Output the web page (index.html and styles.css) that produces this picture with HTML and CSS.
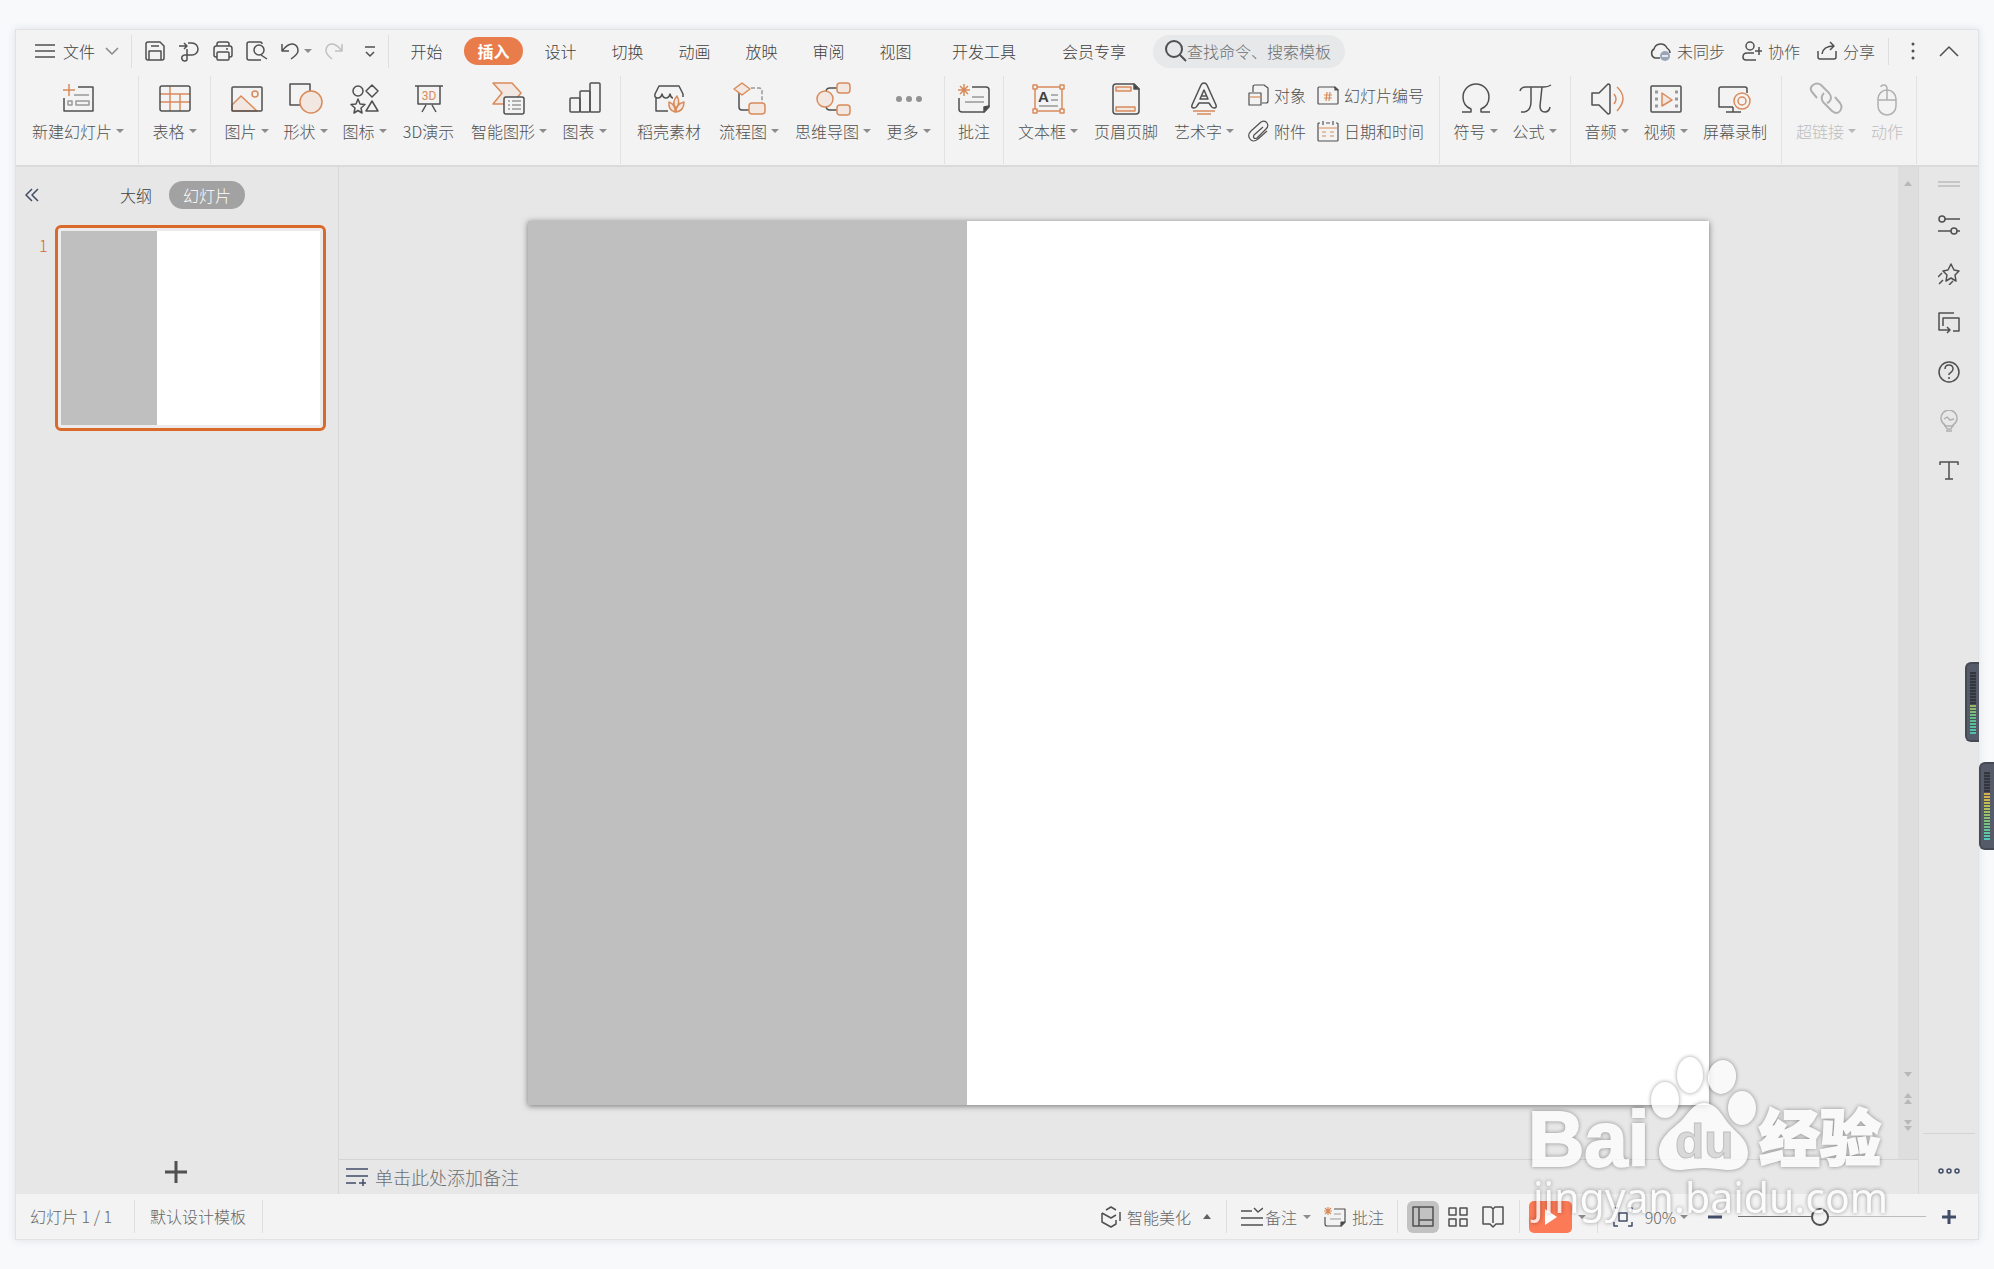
FILE: index.html
```html
<!DOCTYPE html>
<html lang="zh-CN">
<head>
<meta charset="utf-8">
<meta name="viewport" content="width=device-width, initial-scale=1">
<title>演示文稿</title>
<link rel="stylesheet" href="styles.css">
</head>
<body>
<div class="window">
  <header class="header">
    <nav class="menubar">
      <button class="file-menu">
        <svg class="ico" width="20" height="20" viewBox="0 0 20 20"><path d="M0 4h20M0 10h20M0 16h20"/></svg>
        <span>文件</span>
        <svg class="ico muted" width="14" height="10" viewBox="0 0 14 10"><path d="M1 2l6 6 6-6"/></svg>
      </button>
      <span class="rule"></span>
      <div class="quick">
        <button aria-label="保存"><svg class="ico" width="22" height="22" viewBox="0 0 22 22"><path d="M4 2h12l4 4v12q0 2-2 2H4q-2 0-2-2V4q0-2 2-2zM5 20v-9h12v9M7 6h8"/></svg></button>
        <button aria-label="输出"><svg class="ico" width="22" height="22" viewBox="0 0 22 22"><path d="M1 6h8M6 3l3 3-3 3M10 3h4a6 6 0 0 1 0 12H7a3 3 0 1 0 2 5V9"/></svg></button>
        <button aria-label="打印"><svg class="ico" width="22" height="22" viewBox="0 0 22 22"><path d="M5 6V4q0-2 2-2h8q2 0 2 2v2M5 17H4q-2 0-2-2V9q0-3 2-3h14q2 0 2 3v6q0 2-2 2h-1M6 12h10q1 0 1 1v6q0 1-1 1H6q-1 0-1-1v-6q0-1 1-1zM14 9h2"/></svg></button>
        <button aria-label="打印预览"><svg class="ico" width="22" height="22" viewBox="0 0 22 22"><path d="M8 20H3q-2 0-2-2V4q0-2 2-2h11q2 0 2 2"/><circle cx="13" cy="10" r="5"/><path d="M15 15l6 4M8 20h7"/></svg></button>
        <button class="undo" aria-label="撤销"><svg class="ico" width="20" height="22" viewBox="0 0 20 22"><path d="M2 4v7h7M2 11Q8 3 13 4q5 1 5 7 0 3-7 8"/></svg><i class="caret"></i></button>
        <button aria-label="恢复" disabled><svg class="ico pale" width="20" height="22" viewBox="0 0 20 22"><path d="M18 4v7h-7M18 11Q12 3 7 4q-5 1-5 7 0 3 6 8"/></svg></button>
        <button class="more-quick" aria-label="自定义"><svg class="ico" width="12" height="22" viewBox="0 0 12 22"><path d="M1 7h10M2 12l4 4 4-4"/></svg></button>
      </div>
      <span class="rule"></span>
      <div class="tabs">
        <button>开始</button><button class="active">插入</button><button>设计</button><button>切换</button><button>动画</button><button>放映</button><button>审阅</button><button>视图</button><button class="wide">开发工具</button><button class="wide">会员专享</button>
      </div>
      <label class="search">
        <svg class="ico bold" width="22" height="22" viewBox="0 0 22 22"><circle cx="9" cy="9" r="8"/><path d="M15 15l6 6"/></svg>
        <input type="text" placeholder="查找命令、搜索模板" aria-label="查找命令、搜索模板">
      </label>
      <div class="account">
        <button><svg class="ico" width="22" height="22" viewBox="0 0 22 22"><path d="M11 18H6a5 5 0 0 1-1-9 7 7 0 0 1 13-1q3 2 3 5"/><circle class="badge" cx="16" cy="16" r="5"/><path class="light" d="M13 16h6"/></svg>未同步</button>
        <button><svg class="ico" width="20" height="22" viewBox="0 0 20 22"><circle cx="8" cy="6" r="4"/><path d="M14 20H4q-3 0-3-3 0-4 4-4h7M17 7v8M13 11h7"/></svg>协作</button>
        <button><svg class="ico" width="20" height="22" viewBox="0 0 20 22"><path d="M1 11v6q0 2 2 2h14q2 0 2-2v-6M5 14q1-8 12-8M13 2l4 4-4 4"/></svg>分享</button>
        <span class="rule"></span>
        <button aria-label="更多选项"><svg class="dots" width="6" height="20" viewBox="0 0 6 20"><circle cx="3" cy="3" r="1.500"/><circle cx="3" cy="10" r="1.500"/><circle cx="3" cy="17" r="1.500"/></svg></button>
        <button aria-label="收起功能区"><svg class="ico" width="20" height="12" viewBox="0 0 20 12"><path d="M1 11l9-9 9 9"/></svg></button>
      </div>
    </nav>

    <div class="ribbon">
      <div class="group">
        <button class="tool w5"><svg class="ico" width="36" height="36" viewBox="0 0 36 36"><path d="M18 7h15v24H4V18"/><path class="o" d="M3 10h12M9 4v12"/><path class="g" d="M14 15h15M8 21h4v4H8zM16 21h13v4H16z"/></svg><span>新建幻灯片<i class="caret"></i></span></button>
      </div>
      <div class="group">
        <button class="tool w2"><svg class="ico" width="36" height="36" viewBox="0 0 36 36"><path class="o" d="M13 6v25M3 14h30M3 22h30M23 14v17"/><rect x="3" y="6" width="30" height="25" rx="2"/></svg><span>表格<i class="caret"></i></span></button>
      </div>
      <div class="group">
        <button class="tool w2"><svg class="ico" width="36" height="36" viewBox="0 0 36 36"><path class="of" d="M3 25l9-9 16 15H3z"/><circle class="o" cx="26" cy="14" r="3"/><rect x="3" y="7" width="30" height="24" rx="1"/></svg><span>图片<i class="caret"></i></span></button>
        <button class="tool w2"><svg class="ico" width="36" height="36" viewBox="0 0 36 36"><path d="M2 4h20v21H2z"/><circle class="of" cx="23" cy="22" r="11"/></svg><span>形状<i class="caret"></i></span></button>
        <button class="tool w2"><svg class="ico" width="36" height="36" viewBox="0 0 36 36"><circle cx="11" cy="11" r="5"/><path d="M25 5l6 6-6 6-6-6zM25 21l6 10H19zM11 19l2 5 5 .5-4 3.500 1 5-4-2.500-4 2.500 1-5-4-3.500 5-.5z"/></svg><span>图标<i class="caret"></i></span></button>
        <button class="tool w3d"><svg class="ico" width="36" height="36" viewBox="0 0 36 36"><path d="M4 6h28M7 6v18h22V6M15 25l-4 7M21 25l4 7"/><text class="three-d" x="18" y="20">3D</text></svg><span>3D演示</span></button>
        <button class="tool w4"><svg class="ico" width="36" height="36" viewBox="0 0 36 36"><path class="of" d="M2 3h19l9 10-9 11H2l9-11z"/><rect class="paper" x="13" y="17" width="20" height="17" rx="2"/><path class="g" d="M17 21h2M21 21h9M17 25h2M21 25h9M17 29h2M21 29h9"/></svg><span>智能图形<i class="caret"></i></span></button>
        <button class="tool w2"><svg class="ico" width="36" height="36" viewBox="0 0 36 36"><rect x="3" y="18" width="10" height="14" rx="1"/><rect x="13" y="11" width="10" height="21" rx="1"/><rect x="23" y="3" width="10" height="29" rx="1"/></svg><span>图表<i class="caret"></i></span></button>
      </div>
      <div class="group">
        <button class="tool w4m"><svg class="ico" width="36" height="36" viewBox="0 0 36 36"><path d="M32 17v-3l-4-8H8l-4 8q-1 4 3 4 3 0 4-4 1 4 4 4t4-4q1 4 3 4M5 18v13h12"/><path class="of" d="M26 16q-6 7-1 12 5-5 1-12zM18 22q-1 8 6 10 1-7-6-10zM33 22q-8 2-8 10 8-1 8-10z"/></svg><span>稻壳素材</span></button>
        <button class="tool w3"><svg class="ico" width="36" height="36" viewBox="0 0 36 36"><path d="M8 13v14q0 3 3 3h7"/><path class="g" stroke-dasharray="4 2" d="M20 8h8q3 0 3 3v12"/><path class="of" d="M11 3l8 6-8 6-8-6z"/><rect class="of" x="18" y="23" width="16" height="11" rx="3"/></svg><span>流程图<i class="caret"></i></span></button>
        <button class="tool w4"><svg class="ico" width="36" height="36" viewBox="0 0 36 36"><path d="M11 12q0-4 4-4h7M11 26q0 4 4 4h7"/><circle class="of" cx="10" cy="19" r="8"/><rect class="of" x="22" y="3" width="13" height="10" rx="3"/><rect class="of" x="22" y="25" width="13" height="10" rx="3"/></svg><span>思维导图<i class="caret"></i></span></button>
        <button class="tool w2"><svg class="dots soft" width="36" height="36" viewBox="0 0 36 36"><circle cx="8" cy="19" r="3"/><circle cx="18" cy="19" r="3"/><circle cx="28" cy="19" r="3"/></svg><span>更多<i class="caret"></i></span></button>
      </div>
      <div class="group">
        <button class="tool w2n"><svg class="ico" width="36" height="36" viewBox="0 0 36 36"><path d="M16 7h14q3 0 3 3v17l-5 5H6q-3 0-3-3V18"/><path class="ink" d="M33 26l-5 6v-5z"/><path class="o" d="M2 10h12M8 4v12M4 6l8 8M12 6l-8 8"/><path class="g" d="M16 17h12M9 22h19"/></svg><span>批注</span></button>
      </div>
      <div class="group">
        <button class="tool w3"><svg class="ico" width="36" height="36" viewBox="0 0 36 36"><path class="o" d="M5 7h27v24H5z"/><path class="o paper" d="M3 5h4v4H3zM30 5h4v4h-4zM3 29h4v4H3zM30 29h4v4h-4z"/><text class="letter" x="8" y="22">A</text><path class="g" d="M21 15h7M21 20h7M9 26h19"/></svg><span>文本框<i class="caret"></i></span></button>
        <button class="tool w4n"><svg class="ico" width="36" height="36" viewBox="0 0 36 36"><path d="M8 4h18l5 5v22q0 3-3 3H8q-3 0-3-3V7q0-3 3-3z"/><path class="ink" d="M26 4v5h5z"/><path class="of" d="M8 7h15v4H8zM8 27h19v4H8z"/></svg><span>页眉页脚</span></button>
        <button class="tool w3"><svg class="ico" width="36" height="36" viewBox="0 0 36 36"><path d="M18 3q2 0 3 2l9 20q1 3-2 3-2 0-3-2l-2-3H13l-2 3q-1 2-3 2-3 0-2-3L15 5q1-2 3-2zM18 10l-4 9h8z"/><path d="M16 16h4"/><path class="o" d="M7 31h22M11 34h14"/></svg><span>艺术字<i class="caret"></i></span></button>
        <div class="pairs">
          <button><svg class="ico thin" width="22" height="22" viewBox="0 0 22 22"><path d="M6 8V3q0-2 2-2h9l4 3v13q0 2-2 2h-4"/><path d="M2 9h12v12H2z"/><path class="o" d="M2 13h12"/></svg>对象</button>
          <button><svg class="ico thin" width="22" height="22" viewBox="0 0 22 22"><path d="M2 3h15l4 3v13q0 1-1 1H2q-1 0-1-1V4q0-1 1-1z"/><path class="ink" d="M18 3v3h3z"/><path class="o" d="M7 11h8M7 14h8M10 8l-1 9M13 8l-1 9"/></svg>幻灯片编号</button>
          <button><svg class="ico thin" width="22" height="22" viewBox="0 0 22 22"><path d="M16 7l-9 8q-1 2 0 3t3 0l9-9q3-3 1-6t-6-1L4 11q-4 4-1 8t8 0l9-8"/></svg>附件</button>
          <button><svg class="ico thin" width="22" height="22" viewBox="0 0 22 22"><path d="M3 3H2q-1 0-1 1v16q0 1 1 1h18q1 0 1-1V4q0-1-1-1h-1M6 1v4M16 1v4M9 3h4"/><path class="o" d="M1 8h20M5 12h4M13 12h4M5 16h4M13 16h4"/></svg>日期和时间</button>
        </div>
      </div>
      <div class="group">
        <button class="tool w2"><svg class="ico" width="36" height="36" viewBox="0 0 36 36"><path d="M4 32h9v-3C8 27 5 23 5 17a13 13 0 0 1 26 0c0 6-3 10-8 12v3h9"/></svg><span>符号<i class="caret"></i></span></button>
        <button class="tool w2"><svg class="ico" width="36" height="36" viewBox="0 0 36 36"><path d="M3 11q1-4 6-4h18q4 0 7-2M14 7v14q0 12-10 11M25 7l-2 19q0 6 5 6 4 0 5-5"/></svg><span>公式<i class="caret"></i></span></button>
      </div>
      <div class="group">
        <button class="tool w2"><svg class="ico" width="36" height="36" viewBox="0 0 36 36"><path d="M3 13h7l9-9q2 0 2 2v26q0 2-2 2l-9-9H3z"/><path class="o" d="M25 14q4 5 0 10M28 7q12 11 0 24"/></svg><span>音频<i class="caret"></i></span></button>
        <button class="tool w2"><svg class="ico" width="36" height="36" viewBox="0 0 36 36"><rect x="3" y="6" width="30" height="26" rx="1"/><path class="of" d="M14 13v13l10-6z"/><path class="g" stroke-width="3" d="M7 12h3M7 19h3M7 26h3M27 12h3M27 19h3M27 26h3"/></svg><span>视频<i class="caret"></i></span></button>
        <button class="tool w4n"><svg class="ico" width="36" height="36" viewBox="0 0 36 36"><path d="M30 13V9q0-2-2-2H4q-2 0-2 2v18h14M9 32h15M16 27v5"/><circle class="o" cx="25" cy="21" r="8"/><circle class="o" cx="25" cy="21" r="4"/></svg><span>屏幕录制</span></button>
      </div>
      <div class="group">
        <button class="tool w3" disabled><svg class="ico faded bold" width="36" height="36" viewBox="0 0 36 36"><path d="M9 18l-5-6q-3-4 1-7t8 0l8 8q4 5 0 9l-2 1M27 17l5 6q3 4 0 8t-8 0l-9-9q-3-5 1-9"/></svg><span>超链接<i class="caret"></i></span></button>
        <button class="tool w2n" disabled><svg class="ico faded" width="36" height="36" viewBox="0 0 36 36"><rect x="9" y="10" width="18" height="25" rx="9"/><path d="M9 20h18M18 20V9q0-4-3-4t-3 2"/></svg><span>动作</span></button>
      </div>
    </div>
  </header>

  <div class="workspace">
    <aside class="outline">
      <div class="outline-head">
        <button class="collapse" aria-label="收起"><svg class="ico navy" width="14" height="14" viewBox="0 0 14 14"><path d="M7 1L1 7l6 6M13 1L7 7l6 6"/></svg></button>
        <button class="outline-tab">大纲</button>
        <button class="outline-tab active">幻灯片</button>
      </div>
      <ol class="thumbs">
        <li><span class="num">1</span><div class="thumb"><div class="slide-face"><div class="block"></div></div></div></li>
      </ol>
      <button class="add" aria-label="新建幻灯片"><svg class="ico heavy" width="22" height="22" viewBox="0 0 22 22"><path d="M0 11h22M11 0v22"/></svg></button>
    </aside>

    <main class="editor">
      <div class="stage">
        <div class="canvas"><div class="slide slide-face"><div class="block"></div></div></div>
        <div class="scroll">
          <i class="tri up"></i>
          <div class="scroll-end">
            <i class="tri down"></i>
            <span><i class="tri up"></i><i class="tri up"></i></span>
            <span><i class="tri down"></i><i class="tri down"></i></span>
          </div>
        </div>
      </div>
      <label class="notes">
        <svg class="ico navy" width="22" height="20" viewBox="0 0 22 20"><path d="M0 2h22M0 9h22M0 16h10M13 16h7M17 12v7"/></svg>
        <input type="text" placeholder="单击此处添加备注" aria-label="备注">
      </label>
    </main>

    <aside class="side">
      <i class="grip"></i>
      <button aria-label="属性"><svg class="ico" width="22" height="22" viewBox="0 0 22 22"><circle cx="4" cy="5" r="3"/><circle cx="16" cy="17" r="3"/><path d="M7 5h15M0 17h13M19 17h3"/></svg></button>
      <button aria-label="动画"><svg class="ico" width="22" height="22" viewBox="0 0 22 22"><path d="M13 1l3 6 5 1-4 4 1 6-5-3-5 3 1-6-4-4 5-1zM4 10l-4 4M5 17l-4 4M15 18l-4 4"/></svg></button>
      <button aria-label="切换"><svg class="ico" width="22" height="22" viewBox="0 0 22 22"><path d="M16 1H1v17h10M5 14V6h16v13h-6M9 15l3 3-3 3"/></svg></button>
      <button aria-label="帮助"><svg class="ico" width="22" height="22" viewBox="0 0 22 22"><circle cx="11" cy="11" r="10"/><path d="M7 8q0-4 4-4t4 4q0 2-4 5v1M11 16v2"/></svg></button>
      <button aria-label="提示"><svg class="ico faded" width="22" height="22" viewBox="0 0 22 22"><path d="M7 15a8 8 0 1 1 8 0l-2 4H9zM6 16h10M8 21h6M6 9l3-2 3 3 4-1"/></svg></button>
      <button aria-label="文字"><svg class="ico" width="22" height="22" viewBox="0 0 22 22"><path d="M2 6V3h18v3M11 3v17M7 20h8"/></svg></button>
      <div class="side-end"><button aria-label="更多"><svg class="ico navy" width="22" height="8" viewBox="0 0 22 8"><circle cx="3" cy="4" r="2"/><circle cx="11" cy="4" r="2"/><circle cx="19" cy="4" r="2"/></svg></button></div>
    </aside>
  </div>

  <footer class="status">
    <span class="cell">幻灯片 1 / 1</span>
    <span class="cell cell-wide">默认设计模板</span>
    <div class="status-tools">
      <button class="beautify"><svg class="ico" width="20" height="22" viewBox="0 0 20 22"><path d="M5 4l5-3 5 3M1 7l9 5 5-3M1 7v9l9 5 5-3v-4M19 6v9"/></svg>智能美化<i class="tri up dark"></i></button>
      <span class="rule"></span>
      <button class="memo"><svg class="ico" width="22" height="20" viewBox="0 0 22 20"><path d="M0 4h11M13 1l4 4 5-4M0 11h22M0 18h22"/></svg>备注<i class="caret"></i></button>
      <button class="remark"><svg class="ico thin" width="22" height="22" viewBox="0 0 22 22"><path d="M10 3h11v13l-4 4H3q-2 0-2-2v-7"/><path class="ink" d="M21 16l-4 4v-4z"/><path class="o" d="M0 5h8M4 1v8M1 2l6 6M7 2L1 8"/><path class="g" d="M10 8h7M6 13h11"/></svg>批注</button>
      <span class="rule"></span>
      <div class="views">
        <button class="view on" aria-label="普通视图"><svg class="ico" width="22" height="22" viewBox="0 0 22 22"><path d="M1 1h20v19H1zM7 1v19M7 14h14"/></svg></button>
        <button class="view" aria-label="幻灯片浏览"><svg class="ico" width="22" height="22" viewBox="0 0 22 22"><path d="M2 2h7v7H2zM13 2h7v7h-7zM2 13h7v7H2zM13 13h7v7h-7z"/></svg></button>
        <button class="view" aria-label="阅读视图"><svg class="ico" width="22" height="22" viewBox="0 0 22 22"><path d="M11 3v14M11 3L9 1H1v17h7l3 3 3-3h7V1h-8z"/></svg></button>
      </div>
      <span class="rule"></span>
      <button class="play" aria-label="播放"><svg width="14" height="18" viewBox="0 0 14 18"><path fill="#fff" d="M1 1l12 8-12 8z"/></svg></button>
      <i class="caret"></i>
      <span class="rule last"></span>
      <button class="fit" aria-label="适应窗口"><svg class="ico navy" width="20" height="20" viewBox="0 0 20 20"><path d="M1 5V1h4M15 1h4v4M19 15v4h-4M5 19H1v-4M6 6h8v8H6z"/></svg></button>
      <button class="percent">90%<i class="caret"></i></button>
      <button class="step" aria-label="缩小"><svg class="ico navy heavy" width="14" height="14" viewBox="0 0 14 14"><path d="M0 7h14"/></svg></button>
      <input class="zoom" type="range" min="0" max="100" value="43" aria-label="缩放">
      <button class="step" aria-label="放大"><svg class="ico navy heavy" width="14" height="14" viewBox="0 0 14 14"><path d="M0 7h14M7 0v14"/></svg></button>
    </div>
  </footer>
</div>

<div class="meter meter-a"><i></i></div>
<div class="meter meter-b"><i></i></div>

<svg class="watermark" width="370" height="180" viewBox="0 0 370 180">
  <ellipse cx="145" cy="50" rx="14" ry="18"/>
  <ellipse cx="170" cy="25" rx="13" ry="18"/>
  <ellipse cx="202" cy="27" rx="14" ry="17" transform="rotate(10 202 27)"/>
  <ellipse cx="222" cy="58" rx="14" ry="17"/>
  <path d="M184 53c12 0 18 12 24 20 8 10 20 16 20 30 0 12-10 18-22 17-8-1-14-2-22-2s-14 1-22 2c-14 1-23-6-23-18 0-14 12-22 22-31 8-8 12-18 23-18z"/>
  <text class="bai" x="8" y="116">Bai</text>
  <text class="du" x="155" y="108">du</text>
  <text class="exp" x="239" y="111">经验</text>
  <text class="site" x="13" y="163">jingyan.baidu.com</text>
</svg>
</body>
</html>
```
FILE: styles.css
```css
* { box-sizing: border-box; }

body {
  margin: 0;
  min-height: 100vh;
  padding: 29px 15px;
  position: relative;
  overflow-x: hidden;
  background: #f7f9fb;
  color: #505050;
  font: 16px/24px "Noto Sans CJK SC", "Noto Sans", sans-serif;
  font-weight: 300;
}

button {
  border: 0;
  padding: 0;
  margin: 0;
  background: none;
  color: inherit;
  font: inherit;
  white-space: nowrap;
}

input {
  border: 0;
  padding: 0;
  background: none;
  color: #606468;
  font: inherit;
  outline: 0;
  min-width: 0;
}
input::placeholder { color: #6c6f72; opacity: 1; }

svg { display: block; flex: none; }

/* Icon strokes */
.ico { fill: none; stroke: #505050; stroke-width: 1.5; stroke-linejoin: round; }
.ico .o, .ico .of { stroke: #d98b5b; }
.ico .of { fill: #f2e7e1; }
.ico .g { stroke: #999; }
.ico .ink { fill: #404040; }
.ico .paper { fill: #f3f3f3; }
.ico .badge { fill: #9ba5b8; stroke: none; }
.ico .light { stroke: #fff; }
.ico.thin { stroke-width: 1.2; }
.ico.bold { stroke-width: 2; }
.ico.heavy { stroke-width: 3; }
.ico.muted { stroke: #888; }
.ico.pale { stroke: #c0c0c0; }
.ico.faded { stroke: #b0b0b0; }
.ico.navy { stroke: #414c68; }
.dots { fill: #505050; }
.dots.soft { fill: #929292; }
.three-d { fill: #d98b5b; stroke: none; font: 12px Roboto, sans-serif; text-anchor: middle; }
.letter { fill: #404040; stroke: none; font: bold 15px "Liberation Sans", sans-serif; }

.caret {
  display: inline-block;
  border: 4px solid transparent;
  border-top-color: #8c8c8c;
  border-bottom: 0;
  margin-left: 4px;
  vertical-align: 5px;
}

.rule { width: 1px; height: 33px; background: #dfdfdf; flex: none; }

.window {
  min-height: calc(100vh - 58px);
  display: flex;
  flex-direction: column;
  border: 1px solid #e0e2e4;
  background: #e7e7e7;
  box-shadow: 0 0 8px rgba(80, 90, 100, 0.14);
}

/* Header */
.header { background: #f3f3f3; border-bottom: 2px solid #dadada; }

.menubar { height: 42px; margin-bottom: 4px; display: flex; align-items: center; padding: 0 19px; }
.file-menu { display: flex; align-items: center; gap: 8px; margin-right: 12px; color: #404040; }
.file-menu .muted { margin-left: 2px; }
.quick { display: flex; align-items: center; gap: 12px; padding: 0 12px; }
.undo { display: flex; align-items: center; }
.more-quick { margin-left: 8px; }
.tabs { display: flex; gap: 8px; padding: 0 8px; color: #404040; }
.tabs button { width: 59px; height: 28px; border-radius: 14px; line-height: 26px; }
.tabs .wide { width: 102px; }
.tabs .active { background: #e97c4b; color: #fff; font-weight: 700; }
.search {
  display: flex;
  align-items: center;
  width: 192px;
  height: 33px;
  padding: 0 8px 0 12px;
  border-radius: 17px;
  background: #e6e8e9;
}
.search input { width: 150px; }
.account { margin-left: auto; display: flex; align-items: center; gap: 17px; }
.account button { display: flex; align-items: center; gap: 6px; }
.account .rule { height: 27px; margin: 0 4px 0 -4px; }
.account button:last-child { margin-left: 6px; }

.ribbon { display: flex; height: 89px; padding: 0 0 1px 2px; }
.group { display: flex; padding: 0 6px; border-right: 1px solid #e2e2e2; flex: none; }
.tool { display: flex; flex-direction: column; align-items: center; padding-top: 4px; gap: 3px; }
.tool:disabled { color: #bdbdbd; }
.tool:disabled .caret { border-top-color: #b8b8b8; }
.w2 { width: 59px; }
.w3 { width: 76px; }
.w4 { width: 92px; }
.w5 { width: 108px; }
.w2n { width: 46px; }
.w4n { width: 80px; }
.w4m { width: 84px; }
.w3d { width: 69px; }
.pairs {
  display: grid;
  grid-template-columns: 70px 116px;
  grid-template-rows: 36px 36px;
  align-content: start;
  padding: 1px 0 0 5px;
}
.pairs button { display: flex; align-items: center; gap: 5px; }

/* Workspace */
.workspace { flex: 1; display: grid; grid-template-columns: 323px 1fr 60px; }

.outline { display: flex; flex-direction: column; border-right: 1px solid #d8d8d8; }
.outline-head { display: flex; align-items: center; padding: 14px 0 0 9px; }
.collapse { margin-right: 81px; }
.outline-tab { color: #404040; }
.outline-tab.active {
  width: 76px;
  height: 28px;
  margin-left: 17px;
  border-radius: 14px;
  line-height: 26px;
  background: #a2a2a2;
  color: #fff;
}
.thumbs { list-style: none; margin: 16px 12px 0 23px; padding: 0; }
.thumbs li { display: flex; }
.num { width: 16px; padding-top: 8px; color: #d96a2c; font-size: 16px; }
.thumb { flex: 1; padding: 3px; border: 3px solid #d96a2c; border-radius: 6px; background: #ececec; }
.slide-face { aspect-ratio: 1181 / 884; background: #fff; display: flex; }
.block { width: 37.2%; background: #bfbfbf; }
.add { margin: auto auto 11px 149px; }

.editor { display: flex; flex-direction: column; min-width: 0; }
.stage { flex: 1; display: flex; }
.canvas { flex: 1; display: flex; align-items: center; justify-content: center; }
.slide { width: 75.7%; box-shadow: 0 1px 6px rgba(0, 0, 0, 0.5); }
.scroll {
  width: 20px;
  display: flex;
  flex-direction: column;
  align-items: center;
  justify-content: space-between;
  padding: 14px 0 28px;
  background: #dedede;
}
.scroll-end { display: flex; flex-direction: column; align-items: center; gap: 16px; }
.scroll-end span { display: flex; flex-direction: column; gap: 1px; }
.tri { display: block; border: 4px solid transparent; }
.tri.up { border-top: 0; border-bottom: 5px solid #b8b8b8; }
.tri.down { border-bottom: 0; border-top: 5px solid #b8b8b8; }
.tri.up.dark { border-bottom-color: #606060; margin-left: 6px; }
.notes {
  display: flex;
  align-items: center;
  gap: 7px;
  height: 35px;
  padding: 0 7px;
  border-top: 1px solid #d4d4d4;
}
.notes input { flex: 1; font-size: 18px; height: 30px; }

.side {
  display: flex;
  flex-direction: column;
  align-items: center;
  gap: 27px;
  padding-top: 14px;
  border-left: 1px solid #d8d8d8;
}
.grip { width: 22px; height: 6px; border: solid #c6c6c6; border-width: 2px 0; }
.side-end { margin-top: auto; width: 52px; height: 61px; border-top: 1px solid #d4d4d4; }
.side-end button { display: block; margin: 33px auto 0; }

/* Status bar */
.status { display: flex; align-items: center; height: 45px; background: #f3f3f3; color: #666; }
.cell { min-width: 119px; padding: 4px 0 4px 14px; line-height: 25px; border-right: 1px solid #dfdfdf; }
.cell-wide { min-width: 128px; padding-left: 15px; }
.status-tools { margin-left: auto; padding-right: 22px; display: flex; align-items: center; }
.status-tools button { display: flex; align-items: center; justify-content: center; }
.beautify { gap: 6px; margin-right: 15px; }
.memo { margin-left: 14px; gap: 2px; }
.remark { margin: 0 13px; gap: 6px; }
.views { display: flex; gap: 3px; margin: 0 10px 0 9px; }
.view { width: 32px; height: 32px; border-radius: 6px; }
.view.on { background: #c2c2c2; }
.play { width: 43px; height: 32px; margin: 0 2px 0 9px; border-radius: 5px; background: #fc7a56; }
.rule.last { margin: 0 15px 0 11px; }
.fit { margin-right: 8px; }
.percent { width: 51px; }
.step { margin: 0 16px; }
.step:last-child { margin-right: 0; }
.zoom {
  width: 188px;
  height: 18px;
  margin: 0;
  appearance: none;
  background: linear-gradient(to right, #707070 43%, #bdbdbd 43%) center / 100% 1px no-repeat;
}
.zoom::-webkit-slider-thumb {
  appearance: none;
  width: 18px;
  height: 18px;
  border: 2px solid #505050;
  border-radius: 50%;
  background: #f3f3f3;
}

/* Level meters docked on the screen edge */
.meter {
  position: absolute;
  border: 2px solid #454954;
  border-right: 0;
  border-radius: 6px 0 0 6px;
  background: #565b69;
}
.meter i { display: block; margin: 8px 0 0 3px; width: 6px; }
.meter-a { top: 662px; right: 15px; width: 14px; height: 80px; }
.meter-b { top: 762px; right: 0; width: 15px; height: 88px; }
.meter-a i {
  height: 62px;
  background: repeating-linear-gradient(transparent 0 2px, #4b505c 2px 3px), linear-gradient(#33363e 52%, #a3b75c 52%, #62bd8c 75%, #4fc0b0);
}
.meter-b i {
  height: 68px;
  background: repeating-linear-gradient(transparent 0 2px, #4b505c 2px 3px), linear-gradient(#33363e 30%, #dcae45 30%, #b9c052 50%, #7dc179 72%, #4fc8b8);
}

/* Site watermark */
.watermark {
  position: absolute;
  right: 104px;
  bottom: 39px;
  fill: #fff;
  opacity: 0.78;
  filter: drop-shadow(0 0 2px rgba(0, 0, 0, 0.5));
  pointer-events: none;
}
.bai { font: bold 78px "Liberation Sans", sans-serif; stroke: #fff; stroke-width: 2; }
.du { font: bold 48px "Liberation Sans", sans-serif; fill: #d6d6d6; stroke: #b4b4b4; }
.exp { font: 900 61px "Noto Sans CJK SC", sans-serif; stroke: #fff; stroke-width: 2; }
.site { font: 41px "Noto Sans", sans-serif; }
```
